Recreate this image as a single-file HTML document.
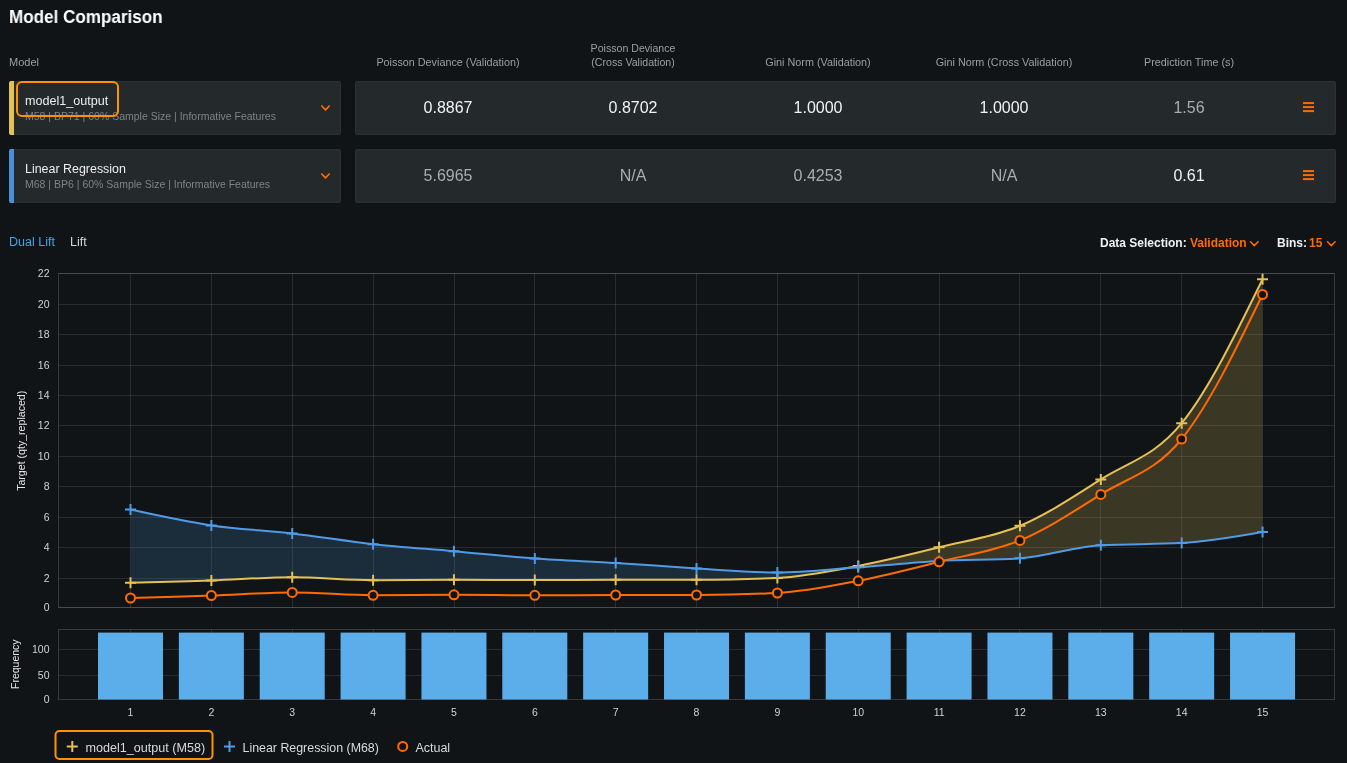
<!DOCTYPE html>
<html><head><meta charset="utf-8"><title>Model Comparison</title>
<style>
html,body{margin:0;padding:0;}
body{width:1347px;height:763px;overflow:hidden;background:#111417;font-family:"Liberation Sans",sans-serif;position:relative;}
.t{position:absolute;white-space:nowrap;will-change:transform;}
.c{position:absolute;box-sizing:border-box;}
svg text{font-family:"Liberation Sans",sans-serif;}
</style></head><body>
<div class="t" style="left:9.40px;top:6.96px;font-size:18px;line-height:20px;color:#ffffff;font-weight:700;transform:scaleX(0.948);transform-origin:0 0;">Model Comparison</div>
<div class="t" style="left:9.00px;top:52.19px;font-size:11px;line-height:20px;color:#9b9fa3;font-weight:400;">Model</div>
<div class="t" style="left:147.80px;width:600px;text-align:center;top:51.76px;font-size:10.8px;line-height:20px;color:#9b9fa3;font-weight:400;">Poisson Deviance (Validation)</div>
<div class="t" style="left:333.10px;width:600px;text-align:center;top:37.83px;font-size:10.6px;line-height:20px;color:#9b9fa3;font-weight:400;">Poisson Deviance</div>
<div class="t" style="left:333.10px;width:600px;text-align:center;top:51.83px;font-size:10.6px;line-height:20px;color:#9b9fa3;font-weight:400;">(Cross Validation)</div>
<div class="t" style="left:518.40px;width:600px;text-align:center;top:51.76px;font-size:10.8px;line-height:20px;color:#9b9fa3;font-weight:400;">Gini Norm (Validation)</div>
<div class="t" style="left:703.70px;width:600px;text-align:center;top:51.76px;font-size:10.8px;line-height:20px;color:#9b9fa3;font-weight:400;">Gini Norm (Cross Validation)</div>
<div class="t" style="left:889.00px;width:600px;text-align:center;top:51.76px;font-size:10.8px;line-height:20px;color:#9b9fa3;font-weight:400;">Prediction Time (s)</div>
<div class="c" style="left:9px;top:81px;width:332px;height:54px;background:#24292c;border-radius:2px;border:1px solid #2c3134;border-radius:2px;"></div>
<div class="c" style="left:9px;top:81px;width:5px;height:54px;background:#e5c055;border-radius:0px;border-radius:2px 0 0 2px;"></div>
<div class="t" style="left:25.00px;top:90.53px;font-size:12.6px;line-height:20px;color:#eeeeee;font-weight:400;">model1_output</div>
<div class="t" style="left:25.00px;top:106.16px;font-size:10.5px;line-height:20px;color:#7f8387;font-weight:400;">M58 | BP71 | 60% Sample Size | Informative Features</div>
<svg class="c" style="left:319px;top:103px" width="14" height="10"><path d="M2.8 3 L6.5 6.8 L10.2 3" fill="none" stroke="#ff6b00" stroke-width="1.7" stroke-linecap="round" stroke-linejoin="round"/></svg>
<div class="c" style="left:355px;top:81px;width:981px;height:54px;background:#24292c;border-radius:2px;border:1px solid #2c3134;border-radius:2px;"></div>
<div class="t" style="left:147.80px;width:600px;text-align:center;top:98.46px;font-size:16px;line-height:20px;color:#f2f2f2;font-weight:400;">0.8867</div>
<div class="t" style="left:333.10px;width:600px;text-align:center;top:98.46px;font-size:16px;line-height:20px;color:#f2f2f2;font-weight:400;">0.8702</div>
<div class="t" style="left:518.40px;width:600px;text-align:center;top:98.46px;font-size:16px;line-height:20px;color:#f2f2f2;font-weight:400;">1.0000</div>
<div class="t" style="left:703.70px;width:600px;text-align:center;top:98.46px;font-size:16px;line-height:20px;color:#f2f2f2;font-weight:400;">1.0000</div>
<div class="t" style="left:889.00px;width:600px;text-align:center;top:98.46px;font-size:16px;line-height:20px;color:#a9adb0;font-weight:400;">1.56</div>
<svg class="c" style="left:1302px;top:101px" width="13" height="13"><rect x="1" y="1.1" width="11" height="2" fill="#ff6b00"/><rect x="1" y="5.1" width="11" height="2" fill="#ff6b00"/><rect x="1" y="9.1" width="11" height="2" fill="#ff6b00"/></svg>
<div class="c" style="left:9px;top:149px;width:332px;height:54px;background:#24292c;border-radius:2px;border:1px solid #2c3134;border-radius:2px;"></div>
<div class="c" style="left:9px;top:149px;width:5px;height:54px;background:#4a90d9;border-radius:0px;border-radius:2px 0 0 2px;"></div>
<div class="t" style="left:25.00px;top:158.59px;font-size:12.45px;line-height:20px;color:#eeeeee;font-weight:400;">Linear Regression</div>
<div class="t" style="left:25.00px;top:174.16px;font-size:10.5px;line-height:20px;color:#7f8387;font-weight:400;">M68 | BP6 | 60% Sample Size | Informative Features</div>
<svg class="c" style="left:319px;top:171px" width="14" height="10"><path d="M2.8 3 L6.5 6.8 L10.2 3" fill="none" stroke="#ff6b00" stroke-width="1.7" stroke-linecap="round" stroke-linejoin="round"/></svg>
<div class="c" style="left:355px;top:149px;width:981px;height:54px;background:#24292c;border-radius:2px;border:1px solid #2c3134;border-radius:2px;"></div>
<div class="t" style="left:147.80px;width:600px;text-align:center;top:166.46px;font-size:16px;line-height:20px;color:#a9adb0;font-weight:400;">5.6965</div>
<div class="t" style="left:333.10px;width:600px;text-align:center;top:166.46px;font-size:16px;line-height:20px;color:#a9adb0;font-weight:400;">N/A</div>
<div class="t" style="left:518.40px;width:600px;text-align:center;top:166.46px;font-size:16px;line-height:20px;color:#a9adb0;font-weight:400;">0.4253</div>
<div class="t" style="left:703.70px;width:600px;text-align:center;top:166.46px;font-size:16px;line-height:20px;color:#a9adb0;font-weight:400;">N/A</div>
<div class="t" style="left:889.00px;width:600px;text-align:center;top:166.46px;font-size:16px;line-height:20px;color:#f2f2f2;font-weight:400;">0.61</div>
<svg class="c" style="left:1302px;top:169px" width="13" height="13"><rect x="1" y="1.1" width="11" height="2" fill="#ff6b00"/><rect x="1" y="5.1" width="11" height="2" fill="#ff6b00"/><rect x="1" y="9.1" width="11" height="2" fill="#ff6b00"/></svg>
<div class="c" style="left:16px;top:81px;width:103px;height:36px;border:2px solid #ff9200;border-radius:6px;"></div>
<div class="t" style="left:9.40px;top:232.17px;font-size:12.5px;line-height:20px;color:#4aa3e0;font-weight:400;">Dual Lift</div>
<div class="t" style="left:69.90px;top:232.17px;font-size:12.5px;line-height:20px;color:#d6d6d6;font-weight:400;">Lift</div>
<div class="t" style="left:1100.30px;top:233.04px;font-size:12px;line-height:20px;color:#f0f0f0;font-weight:700;">Data Selection:</div>
<div class="t" style="left:1189.80px;top:233.04px;font-size:12px;line-height:20px;color:#ff6b00;font-weight:700;">Validation</div>
<svg class="c" style="left:1249px;top:238px" width="12" height="10"><path d="M1.5 3.8 L5.3 7.6 L9.1 3.8" fill="none" stroke="#ff6b00" stroke-width="1.5" stroke-linecap="round" stroke-linejoin="round"/></svg>
<div class="t" style="left:1276.80px;top:233.04px;font-size:12px;line-height:20px;color:#f0f0f0;font-weight:700;">Bins:</div>
<div class="t" style="left:1309.20px;top:233.04px;font-size:12px;line-height:20px;color:#ff6b00;font-weight:700;">15</div>
<svg class="c" style="left:1326px;top:238px" width="12" height="10"><path d="M1.5 3.8 L5.3 7.6 L9.1 3.8" fill="none" stroke="#ff6b00" stroke-width="1.5" stroke-linecap="round" stroke-linejoin="round"/></svg>

<svg class="c" style="left:0;top:0" width="1347" height="763"><line x1="58.5" y1="607.5" x2="1334.5" y2="607.5" stroke="rgba(255,255,255,0.1)" stroke-width="1"/><line x1="58.5" y1="578.5" x2="1334.5" y2="578.5" stroke="rgba(255,255,255,0.1)" stroke-width="1"/><line x1="58.5" y1="547.5" x2="1334.5" y2="547.5" stroke="rgba(255,255,255,0.1)" stroke-width="1"/><line x1="58.5" y1="517.5" x2="1334.5" y2="517.5" stroke="rgba(255,255,255,0.1)" stroke-width="1"/><line x1="58.5" y1="486.5" x2="1334.5" y2="486.5" stroke="rgba(255,255,255,0.1)" stroke-width="1"/><line x1="58.5" y1="456.5" x2="1334.5" y2="456.5" stroke="rgba(255,255,255,0.1)" stroke-width="1"/><line x1="58.5" y1="425.5" x2="1334.5" y2="425.5" stroke="rgba(255,255,255,0.1)" stroke-width="1"/><line x1="58.5" y1="395.5" x2="1334.5" y2="395.5" stroke="rgba(255,255,255,0.1)" stroke-width="1"/><line x1="58.5" y1="365.5" x2="1334.5" y2="365.5" stroke="rgba(255,255,255,0.1)" stroke-width="1"/><line x1="58.5" y1="334.5" x2="1334.5" y2="334.5" stroke="rgba(255,255,255,0.1)" stroke-width="1"/><line x1="58.5" y1="304.5" x2="1334.5" y2="304.5" stroke="rgba(255,255,255,0.1)" stroke-width="1"/><line x1="58.5" y1="273.5" x2="1334.5" y2="273.5" stroke="rgba(255,255,255,0.1)" stroke-width="1"/><line x1="130.5" y1="273.5" x2="130.5" y2="607.5" stroke="rgba(255,255,255,0.1)" stroke-width="1"/><line x1="211.5" y1="273.5" x2="211.5" y2="607.5" stroke="rgba(255,255,255,0.1)" stroke-width="1"/><line x1="292.5" y1="273.5" x2="292.5" y2="607.5" stroke="rgba(255,255,255,0.1)" stroke-width="1"/><line x1="373.5" y1="273.5" x2="373.5" y2="607.5" stroke="rgba(255,255,255,0.1)" stroke-width="1"/><line x1="454.5" y1="273.5" x2="454.5" y2="607.5" stroke="rgba(255,255,255,0.1)" stroke-width="1"/><line x1="534.5" y1="273.5" x2="534.5" y2="607.5" stroke="rgba(255,255,255,0.1)" stroke-width="1"/><line x1="615.5" y1="273.5" x2="615.5" y2="607.5" stroke="rgba(255,255,255,0.1)" stroke-width="1"/><line x1="696.5" y1="273.5" x2="696.5" y2="607.5" stroke="rgba(255,255,255,0.1)" stroke-width="1"/><line x1="777.5" y1="273.5" x2="777.5" y2="607.5" stroke="rgba(255,255,255,0.1)" stroke-width="1"/><line x1="858.5" y1="273.5" x2="858.5" y2="607.5" stroke="rgba(255,255,255,0.1)" stroke-width="1"/><line x1="939.5" y1="273.5" x2="939.5" y2="607.5" stroke="rgba(255,255,255,0.1)" stroke-width="1"/><line x1="1019.5" y1="273.5" x2="1019.5" y2="607.5" stroke="rgba(255,255,255,0.1)" stroke-width="1"/><line x1="1100.5" y1="273.5" x2="1100.5" y2="607.5" stroke="rgba(255,255,255,0.1)" stroke-width="1"/><line x1="1181.5" y1="273.5" x2="1181.5" y2="607.5" stroke="rgba(255,255,255,0.1)" stroke-width="1"/><line x1="1262.5" y1="273.5" x2="1262.5" y2="607.5" stroke="rgba(255,255,255,0.1)" stroke-width="1"/><rect x="58.5" y="273.5" width="1276.0" height="334.0" fill="none" stroke="rgba(255,255,255,0.16)" stroke-width="1"/><text x="49.5" y="611.20" text-anchor="end" font-size="10.5" fill="#cfd2d4">0</text><text x="49.5" y="582.20" text-anchor="end" font-size="10.5" fill="#cfd2d4">2</text><text x="49.5" y="551.20" text-anchor="end" font-size="10.5" fill="#cfd2d4">4</text><text x="49.5" y="521.20" text-anchor="end" font-size="10.5" fill="#cfd2d4">6</text><text x="49.5" y="490.20" text-anchor="end" font-size="10.5" fill="#cfd2d4">8</text><text x="49.5" y="460.20" text-anchor="end" font-size="10.5" fill="#cfd2d4">10</text><text x="49.5" y="429.20" text-anchor="end" font-size="10.5" fill="#cfd2d4">12</text><text x="49.5" y="399.20" text-anchor="end" font-size="10.5" fill="#cfd2d4">14</text><text x="49.5" y="369.20" text-anchor="end" font-size="10.5" fill="#cfd2d4">16</text><text x="49.5" y="338.20" text-anchor="end" font-size="10.5" fill="#cfd2d4">18</text><text x="49.5" y="308.20" text-anchor="end" font-size="10.5" fill="#cfd2d4">20</text><text x="49.5" y="277.20" text-anchor="end" font-size="10.5" fill="#cfd2d4">22</text><defs><clipPath id="ab"><path d="M130.50,509.60 C157.45,515.52 184.41,521.43 211.36,525.40 C238.31,529.37 265.27,530.27 292.22,533.40 C319.17,536.53 346.13,541.23 373.08,544.20 C400.03,547.17 426.99,548.82 453.94,551.20 C480.89,553.58 507.85,556.53 534.80,558.50 C561.75,560.47 588.71,561.35 615.66,563.00 C642.61,564.65 669.57,566.80 696.52,568.40 C723.47,570.00 750.43,572.60 777.38,572.60 C804.33,572.60 831.29,569.23 858.24,567.30 C885.19,565.37 912.15,562.50 939.10,561.00 C966.05,559.50 993.01,560.10 1019.96,558.30 C1046.91,556.50 1073.87,546.60 1100.82,545.20 C1127.77,543.80 1154.73,544.50 1181.68,543.10 C1208.63,541.70 1235.59,536.90 1262.54,532.10 L1262.54,0 L130.50,0 Z"/></clipPath><clipPath id="bb"><path d="M130.50,509.60 C157.45,515.52 184.41,521.43 211.36,525.40 C238.31,529.37 265.27,530.27 292.22,533.40 C319.17,536.53 346.13,541.23 373.08,544.20 C400.03,547.17 426.99,548.82 453.94,551.20 C480.89,553.58 507.85,556.53 534.80,558.50 C561.75,560.47 588.71,561.35 615.66,563.00 C642.61,564.65 669.57,566.80 696.52,568.40 C723.47,570.00 750.43,572.60 777.38,572.60 C804.33,572.60 831.29,569.23 858.24,567.30 C885.19,565.37 912.15,562.50 939.10,561.00 C966.05,559.50 993.01,560.10 1019.96,558.30 C1046.91,556.50 1073.87,546.60 1100.82,545.20 C1127.77,543.80 1154.73,544.50 1181.68,543.10 C1208.63,541.70 1235.59,536.90 1262.54,532.10 L1262.54,763 L130.50,763 Z"/></clipPath></defs><path d="M130.50,582.70 C157.45,582.00 184.41,581.30 211.36,580.40 C238.31,579.50 265.27,577.30 292.22,577.30 C319.17,577.30 346.13,580.20 373.08,580.20 C400.03,580.20 426.99,579.70 453.94,579.70 C480.89,579.70 507.85,580.10 534.80,580.10 C561.75,580.10 588.71,579.87 615.66,579.80 C642.61,579.73 669.57,579.77 696.52,579.70 C723.47,579.63 750.43,579.10 777.38,577.90 C804.33,576.70 831.29,571.00 858.24,565.90 C885.19,560.80 912.15,553.98 939.10,547.30 C966.05,540.62 993.01,537.12 1019.96,525.80 C1046.91,514.48 1073.87,496.50 1100.82,479.40 C1127.77,462.30 1154.73,456.55 1181.68,423.20 C1208.63,389.85 1235.59,334.57 1262.54,279.30 L1262.54,532.10 C1235.59,536.90 1208.63,541.70 1181.68,543.10 C1154.73,544.50 1127.77,543.80 1100.82,545.20 C1073.87,546.60 1046.91,556.50 1019.96,558.30 C993.01,560.10 966.05,559.50 939.10,561.00 C912.15,562.50 885.19,565.37 858.24,567.30 C831.29,569.23 804.33,572.60 777.38,572.60 C750.43,572.60 723.47,570.00 696.52,568.40 C669.57,566.80 642.61,564.65 615.66,563.00 C588.71,561.35 561.75,560.47 534.80,558.50 C507.85,556.53 480.89,553.58 453.94,551.20 C426.99,548.82 400.03,547.17 373.08,544.20 C346.13,541.23 319.17,536.53 292.22,533.40 C265.27,530.27 238.31,529.37 211.36,525.40 C184.41,521.43 157.45,515.52 130.50,509.60 Z" fill="#e6c15e" fill-opacity="0.2" clip-path="url(#ab)"/><path d="M130.50,582.70 C157.45,582.00 184.41,581.30 211.36,580.40 C238.31,579.50 265.27,577.30 292.22,577.30 C319.17,577.30 346.13,580.20 373.08,580.20 C400.03,580.20 426.99,579.70 453.94,579.70 C480.89,579.70 507.85,580.10 534.80,580.10 C561.75,580.10 588.71,579.87 615.66,579.80 C642.61,579.73 669.57,579.77 696.52,579.70 C723.47,579.63 750.43,579.10 777.38,577.90 C804.33,576.70 831.29,571.00 858.24,565.90 C885.19,560.80 912.15,553.98 939.10,547.30 C966.05,540.62 993.01,537.12 1019.96,525.80 C1046.91,514.48 1073.87,496.50 1100.82,479.40 C1127.77,462.30 1154.73,456.55 1181.68,423.20 C1208.63,389.85 1235.59,334.57 1262.54,279.30 L1262.54,532.10 C1235.59,536.90 1208.63,541.70 1181.68,543.10 C1154.73,544.50 1127.77,543.80 1100.82,545.20 C1073.87,546.60 1046.91,556.50 1019.96,558.30 C993.01,560.10 966.05,559.50 939.10,561.00 C912.15,562.50 885.19,565.37 858.24,567.30 C831.29,569.23 804.33,572.60 777.38,572.60 C750.43,572.60 723.47,570.00 696.52,568.40 C669.57,566.80 642.61,564.65 615.66,563.00 C588.71,561.35 561.75,560.47 534.80,558.50 C507.85,556.53 480.89,553.58 453.94,551.20 C426.99,548.82 400.03,547.17 373.08,544.20 C346.13,541.23 319.17,536.53 292.22,533.40 C265.27,530.27 238.31,529.37 211.36,525.40 C184.41,521.43 157.45,515.52 130.50,509.60 Z" fill="#4f9be6" fill-opacity="0.18" clip-path="url(#bb)"/><path d="M130.50,582.70 C157.45,582.00 184.41,581.30 211.36,580.40 C238.31,579.50 265.27,577.30 292.22,577.30 C319.17,577.30 346.13,580.20 373.08,580.20 C400.03,580.20 426.99,579.70 453.94,579.70 C480.89,579.70 507.85,580.10 534.80,580.10 C561.75,580.10 588.71,579.87 615.66,579.80 C642.61,579.73 669.57,579.77 696.52,579.70 C723.47,579.63 750.43,579.10 777.38,577.90 C804.33,576.70 831.29,571.00 858.24,565.90 C885.19,560.80 912.15,553.98 939.10,547.30 C966.05,540.62 993.01,537.12 1019.96,525.80 C1046.91,514.48 1073.87,496.50 1100.82,479.40 C1127.77,462.30 1154.73,456.55 1181.68,423.20 C1208.63,389.85 1235.59,334.57 1262.54,279.30" fill="none" stroke="#e5c055" stroke-width="2"/><path d="M130.50,509.60 C157.45,515.52 184.41,521.43 211.36,525.40 C238.31,529.37 265.27,530.27 292.22,533.40 C319.17,536.53 346.13,541.23 373.08,544.20 C400.03,547.17 426.99,548.82 453.94,551.20 C480.89,553.58 507.85,556.53 534.80,558.50 C561.75,560.47 588.71,561.35 615.66,563.00 C642.61,564.65 669.57,566.80 696.52,568.40 C723.47,570.00 750.43,572.60 777.38,572.60 C804.33,572.60 831.29,569.23 858.24,567.30 C885.19,565.37 912.15,562.50 939.10,561.00 C966.05,559.50 993.01,560.10 1019.96,558.30 C1046.91,556.50 1073.87,546.60 1100.82,545.20 C1127.77,543.80 1154.73,544.50 1181.68,543.10 C1208.63,541.70 1235.59,536.90 1262.54,532.10" fill="none" stroke="#4f9be6" stroke-width="2"/><path d="M130.50,598.00 C157.45,597.22 184.41,596.43 211.36,595.50 C238.31,594.57 265.27,592.40 292.22,592.40 C319.17,592.40 346.13,595.30 373.08,595.30 C400.03,595.30 426.99,594.80 453.94,594.80 C480.89,594.80 507.85,595.30 534.80,595.30 C561.75,595.30 588.71,595.00 615.66,595.00 C642.61,595.00 669.57,595.00 696.52,595.00 C723.47,595.00 750.43,594.33 777.38,593.00 C804.33,591.67 831.29,586.00 858.24,580.80 C885.19,575.60 912.15,568.53 939.10,561.80 C966.05,555.07 993.01,551.63 1019.96,540.40 C1046.91,529.17 1073.87,511.30 1100.82,494.40 C1127.77,477.50 1154.73,472.32 1181.68,439.00 C1208.63,405.68 1235.59,350.09 1262.54,294.50" fill="none" stroke="#ff6b00" stroke-width="2"/><path d="M125.00,582.70 H136.00 M130.50,577.20 V588.20" stroke="#e5c055" stroke-width="2" fill="none"/><path d="M205.86,580.40 H216.86 M211.36,574.90 V585.90" stroke="#e5c055" stroke-width="2" fill="none"/><path d="M286.72,577.30 H297.72 M292.22,571.80 V582.80" stroke="#e5c055" stroke-width="2" fill="none"/><path d="M367.58,580.20 H378.58 M373.08,574.70 V585.70" stroke="#e5c055" stroke-width="2" fill="none"/><path d="M448.44,579.70 H459.44 M453.94,574.20 V585.20" stroke="#e5c055" stroke-width="2" fill="none"/><path d="M529.30,580.10 H540.30 M534.80,574.60 V585.60" stroke="#e5c055" stroke-width="2" fill="none"/><path d="M610.16,579.80 H621.16 M615.66,574.30 V585.30" stroke="#e5c055" stroke-width="2" fill="none"/><path d="M691.02,579.70 H702.02 M696.52,574.20 V585.20" stroke="#e5c055" stroke-width="2" fill="none"/><path d="M771.88,577.90 H782.88 M777.38,572.40 V583.40" stroke="#e5c055" stroke-width="2" fill="none"/><path d="M852.74,565.90 H863.74 M858.24,560.40 V571.40" stroke="#e5c055" stroke-width="2" fill="none"/><path d="M933.60,547.30 H944.60 M939.10,541.80 V552.80" stroke="#e5c055" stroke-width="2" fill="none"/><path d="M1014.46,525.80 H1025.46 M1019.96,520.30 V531.30" stroke="#e5c055" stroke-width="2" fill="none"/><path d="M1095.32,479.40 H1106.32 M1100.82,473.90 V484.90" stroke="#e5c055" stroke-width="2" fill="none"/><path d="M1176.18,423.20 H1187.18 M1181.68,417.70 V428.70" stroke="#e5c055" stroke-width="2" fill="none"/><path d="M1257.04,279.30 H1268.04 M1262.54,273.80 V284.80" stroke="#e5c055" stroke-width="2" fill="none"/><path d="M125.00,509.60 H136.00 M130.50,504.10 V515.10" stroke="#4f9be6" stroke-width="2" fill="none"/><path d="M205.86,525.40 H216.86 M211.36,519.90 V530.90" stroke="#4f9be6" stroke-width="2" fill="none"/><path d="M286.72,533.40 H297.72 M292.22,527.90 V538.90" stroke="#4f9be6" stroke-width="2" fill="none"/><path d="M367.58,544.20 H378.58 M373.08,538.70 V549.70" stroke="#4f9be6" stroke-width="2" fill="none"/><path d="M448.44,551.20 H459.44 M453.94,545.70 V556.70" stroke="#4f9be6" stroke-width="2" fill="none"/><path d="M529.30,558.50 H540.30 M534.80,553.00 V564.00" stroke="#4f9be6" stroke-width="2" fill="none"/><path d="M610.16,563.00 H621.16 M615.66,557.50 V568.50" stroke="#4f9be6" stroke-width="2" fill="none"/><path d="M691.02,568.40 H702.02 M696.52,562.90 V573.90" stroke="#4f9be6" stroke-width="2" fill="none"/><path d="M771.88,572.60 H782.88 M777.38,567.10 V578.10" stroke="#4f9be6" stroke-width="2" fill="none"/><path d="M852.74,567.30 H863.74 M858.24,561.80 V572.80" stroke="#4f9be6" stroke-width="2" fill="none"/><path d="M933.60,561.00 H944.60 M939.10,555.50 V566.50" stroke="#4f9be6" stroke-width="2" fill="none"/><path d="M1014.46,558.30 H1025.46 M1019.96,552.80 V563.80" stroke="#4f9be6" stroke-width="2" fill="none"/><path d="M1095.32,545.20 H1106.32 M1100.82,539.70 V550.70" stroke="#4f9be6" stroke-width="2" fill="none"/><path d="M1176.18,543.10 H1187.18 M1181.68,537.60 V548.60" stroke="#4f9be6" stroke-width="2" fill="none"/><path d="M1257.04,532.10 H1268.04 M1262.54,526.60 V537.60" stroke="#4f9be6" stroke-width="2" fill="none"/><circle cx="130.50" cy="598.00" r="4.5" fill="#111417" stroke="#ff6b00" stroke-width="2"/><circle cx="211.36" cy="595.50" r="4.5" fill="#111417" stroke="#ff6b00" stroke-width="2"/><circle cx="292.22" cy="592.40" r="4.5" fill="#111417" stroke="#ff6b00" stroke-width="2"/><circle cx="373.08" cy="595.30" r="4.5" fill="#111417" stroke="#ff6b00" stroke-width="2"/><circle cx="453.94" cy="594.80" r="4.5" fill="#111417" stroke="#ff6b00" stroke-width="2"/><circle cx="534.80" cy="595.30" r="4.5" fill="#111417" stroke="#ff6b00" stroke-width="2"/><circle cx="615.66" cy="595.00" r="4.5" fill="#111417" stroke="#ff6b00" stroke-width="2"/><circle cx="696.52" cy="595.00" r="4.5" fill="#111417" stroke="#ff6b00" stroke-width="2"/><circle cx="777.38" cy="593.00" r="4.5" fill="#111417" stroke="#ff6b00" stroke-width="2"/><circle cx="858.24" cy="580.80" r="4.5" fill="#111417" stroke="#ff6b00" stroke-width="2"/><circle cx="939.10" cy="561.80" r="4.5" fill="#111417" stroke="#ff6b00" stroke-width="2"/><circle cx="1019.96" cy="540.40" r="4.5" fill="#111417" stroke="#ff6b00" stroke-width="2"/><circle cx="1100.82" cy="494.40" r="4.5" fill="#111417" stroke="#ff6b00" stroke-width="2"/><circle cx="1181.68" cy="439.00" r="4.5" fill="#111417" stroke="#ff6b00" stroke-width="2"/><circle cx="1262.54" cy="294.50" r="4.5" fill="#111417" stroke="#ff6b00" stroke-width="2"/><line x1="58.5" y1="649.50" x2="1334.5" y2="649.50" stroke="rgba(255,255,255,0.1)" stroke-width="1"/><line x1="58.5" y1="675.50" x2="1334.5" y2="675.50" stroke="rgba(255,255,255,0.1)" stroke-width="1"/><line x1="130.5" y1="629.5" x2="130.5" y2="699.5" stroke="rgba(255,255,255,0.1)" stroke-width="1"/><line x1="211.5" y1="629.5" x2="211.5" y2="699.5" stroke="rgba(255,255,255,0.1)" stroke-width="1"/><line x1="292.5" y1="629.5" x2="292.5" y2="699.5" stroke="rgba(255,255,255,0.1)" stroke-width="1"/><line x1="373.5" y1="629.5" x2="373.5" y2="699.5" stroke="rgba(255,255,255,0.1)" stroke-width="1"/><line x1="454.5" y1="629.5" x2="454.5" y2="699.5" stroke="rgba(255,255,255,0.1)" stroke-width="1"/><line x1="534.5" y1="629.5" x2="534.5" y2="699.5" stroke="rgba(255,255,255,0.1)" stroke-width="1"/><line x1="615.5" y1="629.5" x2="615.5" y2="699.5" stroke="rgba(255,255,255,0.1)" stroke-width="1"/><line x1="696.5" y1="629.5" x2="696.5" y2="699.5" stroke="rgba(255,255,255,0.1)" stroke-width="1"/><line x1="777.5" y1="629.5" x2="777.5" y2="699.5" stroke="rgba(255,255,255,0.1)" stroke-width="1"/><line x1="858.5" y1="629.5" x2="858.5" y2="699.5" stroke="rgba(255,255,255,0.1)" stroke-width="1"/><line x1="939.5" y1="629.5" x2="939.5" y2="699.5" stroke="rgba(255,255,255,0.1)" stroke-width="1"/><line x1="1019.5" y1="629.5" x2="1019.5" y2="699.5" stroke="rgba(255,255,255,0.1)" stroke-width="1"/><line x1="1100.5" y1="629.5" x2="1100.5" y2="699.5" stroke="rgba(255,255,255,0.1)" stroke-width="1"/><line x1="1181.5" y1="629.5" x2="1181.5" y2="699.5" stroke="rgba(255,255,255,0.1)" stroke-width="1"/><line x1="1262.5" y1="629.5" x2="1262.5" y2="699.5" stroke="rgba(255,255,255,0.1)" stroke-width="1"/><rect x="58.5" y="629.5" width="1276.0" height="70.0" fill="none" stroke="rgba(255,255,255,0.16)" stroke-width="1"/><rect x="98.00" y="632.6" width="65" height="66.90" fill="#5caeea"/><rect x="178.86" y="632.6" width="65" height="66.90" fill="#5caeea"/><rect x="259.72" y="632.6" width="65" height="66.90" fill="#5caeea"/><rect x="340.58" y="632.6" width="65" height="66.90" fill="#5caeea"/><rect x="421.44" y="632.6" width="65" height="66.90" fill="#5caeea"/><rect x="502.30" y="632.6" width="65" height="66.90" fill="#5caeea"/><rect x="583.16" y="632.6" width="65" height="66.90" fill="#5caeea"/><rect x="664.02" y="632.6" width="65" height="66.90" fill="#5caeea"/><rect x="744.88" y="632.6" width="65" height="66.90" fill="#5caeea"/><rect x="825.74" y="632.6" width="65" height="66.90" fill="#5caeea"/><rect x="906.60" y="632.6" width="65" height="66.90" fill="#5caeea"/><rect x="987.46" y="632.6" width="65" height="66.90" fill="#5caeea"/><rect x="1068.32" y="632.6" width="65" height="66.90" fill="#5caeea"/><rect x="1149.18" y="632.6" width="65" height="66.90" fill="#5caeea"/><rect x="1230.04" y="632.6" width="65" height="66.90" fill="#5caeea"/><text x="49.5" y="703.20" text-anchor="end" font-size="10.5" fill="#cfd2d4">0</text><text x="49.5" y="679.20" text-anchor="end" font-size="10.5" fill="#cfd2d4">50</text><text x="49.5" y="653.20" text-anchor="end" font-size="10.5" fill="#cfd2d4">100</text><text x="130.50" y="716.3" text-anchor="middle" font-size="10.5" fill="#cfd2d4">1</text><text x="211.36" y="716.3" text-anchor="middle" font-size="10.5" fill="#cfd2d4">2</text><text x="292.22" y="716.3" text-anchor="middle" font-size="10.5" fill="#cfd2d4">3</text><text x="373.08" y="716.3" text-anchor="middle" font-size="10.5" fill="#cfd2d4">4</text><text x="453.94" y="716.3" text-anchor="middle" font-size="10.5" fill="#cfd2d4">5</text><text x="534.80" y="716.3" text-anchor="middle" font-size="10.5" fill="#cfd2d4">6</text><text x="615.66" y="716.3" text-anchor="middle" font-size="10.5" fill="#cfd2d4">7</text><text x="696.52" y="716.3" text-anchor="middle" font-size="10.5" fill="#cfd2d4">8</text><text x="777.38" y="716.3" text-anchor="middle" font-size="10.5" fill="#cfd2d4">9</text><text x="858.24" y="716.3" text-anchor="middle" font-size="10.5" fill="#cfd2d4">10</text><text x="939.10" y="716.3" text-anchor="middle" font-size="10.5" fill="#cfd2d4">11</text><text x="1019.96" y="716.3" text-anchor="middle" font-size="10.5" fill="#cfd2d4">12</text><text x="1100.82" y="716.3" text-anchor="middle" font-size="10.5" fill="#cfd2d4">13</text><text x="1181.68" y="716.3" text-anchor="middle" font-size="10.5" fill="#cfd2d4">14</text><text x="1262.54" y="716.3" text-anchor="middle" font-size="10.5" fill="#cfd2d4">15</text><text transform="translate(24.8,440.8) rotate(-90)" text-anchor="middle" font-size="10.6" fill="#e6e6e6">Target (qty_replaced)</text><text transform="translate(18.8,664.2) rotate(-90)" text-anchor="middle" font-size="10.5" fill="#e6e6e6">Frequency</text><rect x="55.5" y="731" width="157" height="28" rx="4" fill="none" stroke="#ff9200" stroke-width="2"/><path d="M66.80,746.40 H77.80 M72.30,740.90 V751.90" stroke="#e5c055" stroke-width="2" fill="none"/><text x="85.5" y="752.2" font-size="12.6" fill="#d9d9d9">model1_output (M58)</text><path d="M224.00,746.40 H235.00 M229.50,740.90 V751.90" stroke="#4f9be6" stroke-width="2" fill="none"/><text x="242.5" y="752.2" font-size="12.4" fill="#d9d9d9">Linear Regression (M68)</text><circle cx="402.7" cy="746.4" r="4.5" fill="none" stroke="#ff6b00" stroke-width="2"/><text x="415.4" y="752.2" font-size="12.5" fill="#d9d9d9">Actual</text></svg>

</body></html>
